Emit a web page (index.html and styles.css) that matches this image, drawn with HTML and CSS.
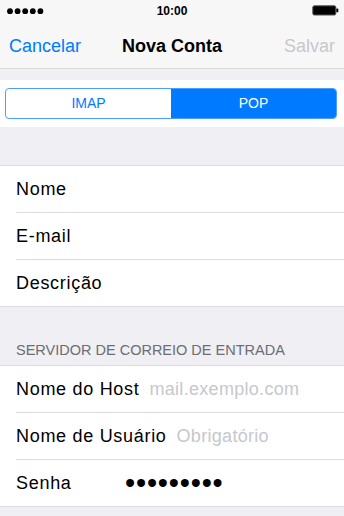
FILE: index.html
```html
<!doctype html>
<html lang="pt-br">
	<head>
		<meta charset="UTF-8">
		<title>Nova Conta</title>
		<link rel="stylesheet" href="styles.css">
	</head>
	<body>
		<div class="statusbar">
			<svg class="signal" width="40" height="20" viewBox="0 0 40 20">
				<circle cx="3" cy="11.2" r="2.9"/>
				<circle cx="10.6" cy="11.2" r="2.9"/>
				<circle cx="18.2" cy="11.2" r="2.9"/>
				<circle cx="25.8" cy="11.2" r="2.9"/>
				<circle cx="33.4" cy="11.2" r="2.9"/>
			</svg>
			<span class="time">10:00</span>
			<svg class="battery" width="27" height="20" viewBox="0 0 27 20">
				<rect x="0.8" y="5.8" width="23" height="9.2" rx="1.5" fill="#000" stroke="#555" stroke-width="1"/>
				<rect x="24.3" y="8.6" width="2" height="3.6" fill="#000"/>
			</svg>
		</div>
		<div class="navbar">
			<span class="nav-left">Cancelar</span>
			<span class="nav-title">Nova Conta</span>
			<span class="nav-right">Salvar</span>
		</div>
		<div class="gap-small"></div>
		<div class="segment-wrap">
			<div class="segmented">
				<span>IMAP</span>
				<span class="active">POP</span>
			</div>
		</div>
		<div class="gap-large"></div>
		<ul class="table">
			<li>Nome</li>
			<li>E-mail</li>
			<li>Descrição</li>
		</ul>
		<div class="section-header">SERVIDOR DE CORREIO DE ENTRADA</div>
		<ul class="table">
			<li>Nome do Host<span class="placeholder">mail.exemplo.com</span></li>
			<li>Nome de Usuário<span class="placeholder">Obrigatório</span></li>
			<li><span class="label-fixed">Senha</span><span class="password">•••••••••</span></li>
		</ul>
	</body>
</html>
```

FILE: styles.css
```css
html,body,div,ul,li,span {
	margin: 0;
	padding: 0;
	box-sizing: border-box;
}
ul {
	list-style: none;
}
body {
	width: 344px;
	background-color: #efeff4;
	font-family: "Liberation Sans", Arial, sans-serif;
	color: #000;
}
.statusbar {
	height: 20px;
	background-color: #f7f7f8;
	display: grid;
	grid-template-columns: 1fr auto 1fr;
	align-items: start;
}
.signal {
	display: block;
	margin-left: 6.6px;
}
.time {
	font-size: 12px;
	font-weight: bold;
	line-height: 22px;
	height: 20px;
}
.battery {
	display: block;
	justify-self: end;
	margin-right: 5px;
}
.navbar {
	height: 49px;
	background-color: #f7f7f8;
	border-bottom: 1px solid #d8d8dc;
	display: grid;
	grid-template-columns: 1fr auto 1fr;
	padding-top: 4px;
	line-height: 44px;
	font-size: 18px;
}
.nav-left {
	color: #007aff;
	padding-left: 9px;
}
.nav-title {
	font-weight: bold;
}
.nav-right {
	color: #c7c7cc;
	justify-self: end;
	padding-right: 9px;
}
.gap-small {
	height: 11px;
}
.segment-wrap {
	background-color: #fff;
	padding: 8px 7px 8px 5px;
}
.segmented {
	display: grid;
	grid-template-columns: 1fr 1fr;
	border: 1px solid #4d9dff;
	border-radius: 4px;
	overflow: hidden;
	height: 31px;
}
.segmented span {
	text-align: center;
	line-height: 29px;
	font-size: 14px;
	color: #007aff;
}
.segmented .active {
	background-color: #007aff;
	color: #fff;
}
.gap-large {
	height: 38px;
}
.table {
	background-color: #fff;
	border-top: 1px solid #dcdce0;
	border-bottom: 1px solid #dcdce0;
}
.table li {
	margin-left: 16px;
	height: 47px;
	line-height: 46px;
	font-size: 18px;
	letter-spacing: 0.7px;
	border-top: 1px solid #dcdce0;
	display: flex;
}
.table li:first-child {
	height: 46px;
	border-top: none;
}
.placeholder {
	color: #c7c7cd;
	margin-left: 10px;
	letter-spacing: 0.3px;
}
.label-fixed {
	width: 109px;
}
.password {
	font-size: 29px;
	letter-spacing: 0.8px;
}
.section-header {
	height: 58px;
	display: flex;
	align-items: flex-end;
	padding: 0 0 7px 16px;
	font-size: 14.5px;
	line-height: 16px;
	color: #6d6d72;
}
```
